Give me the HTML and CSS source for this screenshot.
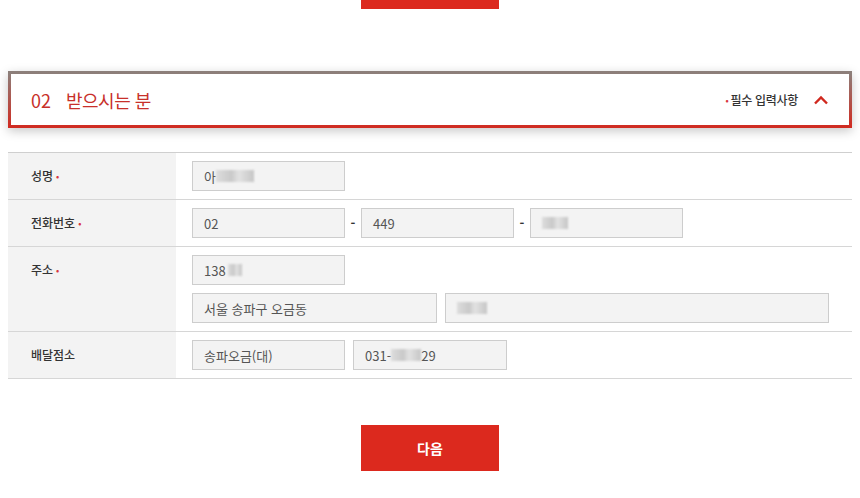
FILE: index.html
```html
<!DOCTYPE html>
<html lang="ko">
<head>
<meta charset="utf-8">
<link rel="stylesheet" href="styles.css">
</head>
<body>
<div class="page">
  <div class="top-btn-wrap"><div class="top-btn"></div></div>

  <div class="section-head">
    <h2 class="sec-title"><span class="sec-num">02</span><span>받으시는 분</span></h2>
    <div class="sec-right">
      <span class="req-note"><span class="dot">•</span>필수 입력사항</span>
      <svg class="chev" width="16" height="10" viewBox="0 0 16 10"><path d="M2 8.5 L8 2.5 L14 8.5" fill="none" stroke="#d0281e" stroke-width="2.4"/></svg>
    </div>
  </div>

  <div class="form">
    <div class="row">
      <div class="label">성명<span class="dot">•</span></div>
      <div class="field">
        <div class="line">
          <div class="input w153">아<span class="blur b1"></span></div>
        </div>
      </div>
    </div>
    <div class="row">
      <div class="label">전화번호<span class="dot">•</span></div>
      <div class="field">
        <div class="line">
          <div class="input w153">02</div>
          <span class="dash">-</span>
          <div class="input w153">449</div>
          <span class="dash">-</span>
          <div class="input w153"><span class="blur b2"></span></div>
        </div>
      </div>
    </div>
    <div class="row">
      <div class="label">주소<span class="dot">•</span></div>
      <div class="field">
        <div class="line">
          <div class="input w153">138<span class="blur b3"></span></div>
        </div>
        <div class="line gap8">
          <div class="input w245">서울 송파구 오금동</div>
          <div class="input w384"><span class="blur b4"></span></div>
        </div>
      </div>
    </div>
    <div class="row">
      <div class="label">배달점소</div>
      <div class="field">
        <div class="line gap8">
          <div class="input w153">송파오금(대)</div>
          <div class="input w154">031-<span class="blur b5"></span>29</div>
        </div>
      </div>
    </div>
  </div>

  <div class="btn-wrap"><button class="next-btn">다음</button></div>
</div>
</body>
</html>
```
FILE: styles.css
```css
* { box-sizing: border-box; }
html, body { margin: 0; padding: 0; background: #fff; }
body {
  font-family: "Noto Sans CJK KR", "Noto Sans", "Liberation Sans", sans-serif;
  color: #333;
  width: 860px;
  height: 498px;
  overflow: hidden;
}
.page { padding: 0 8px; }
.top-btn-wrap { display: flex; justify-content: center; height: 9px; }
.top-btn { width: 138px; height: 9px; background: #dc291e; }

.section-head {
  margin-top: 62px;
  height: 57px;
  border: 3px solid transparent;
  border-image: linear-gradient(to bottom, #8c7f7a, #d02c22) 1;
  box-shadow: 0 3px 10px rgba(0,0,0,0.22);
  display: flex;
  align-items: center;
  justify-content: space-between;
  padding: 0 20px 0 20px;
  background: #fff;
}
.sec-title {
  margin: 0;
  font-size: 18px;
  font-weight: 400;
  color: #c8302a;
  display: flex;
  gap: 15px;
  letter-spacing: -0.5px;
}
.sec-num { letter-spacing: 0; }
.sec-right { display: flex; align-items: center; gap: 15px; }
.req-note { font-size: 12px; color: #333; font-weight: 500; letter-spacing: -0.3px; }
.req-note .dot { margin-right: 2px; }
.dot { color: #d9363e; font-size: 9px; margin-left: 3px; vertical-align: 1px; line-height: 0; }
.chev { display: block; margin-top: 1px; }

.form { margin-top: 24px; border-top: 1px solid #cfcfcf; }
.row { display: flex; border-bottom: 1px solid #d6d6d6; }
.label {
  width: 168px;
  background: #f3f3f3;
  padding: 8px 0 8px 23px;
  font-size: 12px;
  font-weight: 500;
  line-height: 30px;
  color: #333;
}
.label-inner { height: 30px; }
.field { padding: 8px 0 8px 16px; display: flex; flex-direction: column; gap: 8px; }
.line { display: flex; align-items: center; height: 30px; }
.gap8 { gap: 8px; }
.input {
  height: 30px;
  background: #f3f3f3;
  border: 1px solid #cdcdcd;
  font-size: 13px;
  color: #555;
  padding-left: 11px;
  display: flex;
  align-items: center;
}
.w153 { width: 153px; }
.w154 { width: 154px; }
.w245 { width: 245px; }
.w384 { width: 384px; }
.dash { width: 16px; text-align: center; font-size: 13px; line-height: 30px; color: #333; font-weight: 700; }
.blur { display: inline-block; height: 12px; background: linear-gradient(90deg, #ddd, #c9c9c9 40%, #e2e2e2 60%, #c6c6c6); filter: blur(1px); }
.b1 { width: 38px; }
.b2 { width: 26px; }
.b3 { width: 14px; margin-left: 2px; }
.b4 { width: 30px; }
.b5 { width: 30px; }

.btn-wrap { display: flex; justify-content: center; margin-top: 46px; }
.next-btn {
  width: 138px;
  height: 46px;
  border: none;
  background: #dc291e;
  color: #fff;
  font-family: inherit;
  font-size: 14px;
  font-weight: 700;
}
```
